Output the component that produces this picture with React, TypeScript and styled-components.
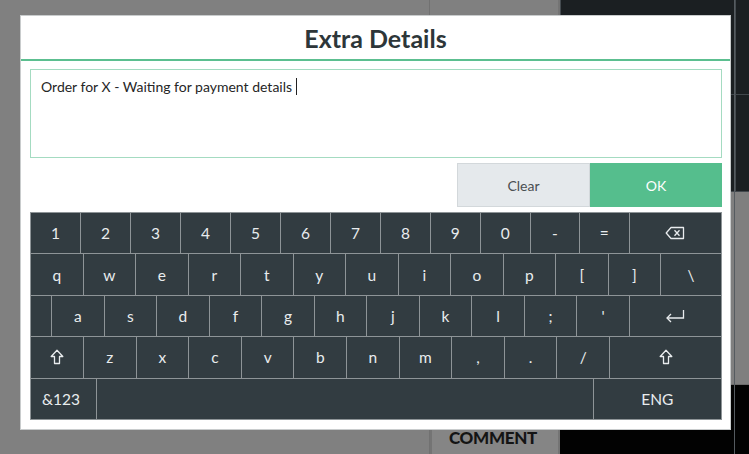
import React from "react";
import styled, { createGlobalStyle } from "styled-components";

const Global = createGlobalStyle`
  html, body { margin: 0; padding: 0; background: #808080; }
  body { font-family: Lato, "Segoe UI", "Open Sans", sans-serif; }
  * { box-sizing: border-box; }
`;

const Page = styled.div`
  position: relative;
  width: 749px;
  height: 454px;
  overflow: hidden;
  display: grid;
  grid-template-columns: 430px 130px 175px 14px;
  background: #808080;
`;

const GrayCol = styled.div`
  background: #808080;
  border-right: 1px solid #717171;
`;

const MidCol = styled.div`
  display: flex;
  flex-direction: column;
  justify-content: flex-end;
  background: #808080;
  border-right: 2px solid #747474;
`;

const CommentCell = styled.div`
  height: 30px;
  display: flex;
  align-items: center;
  justify-content: center;
  padding-bottom: 4px;
  padding-right: 4px;
  background: #858585;
  border-left: 2px solid #747474;
  font-weight: 900;
  font-size: 17px;
  color: #141414;
  letter-spacing: -0.3px;
`;

const RightCol = styled.div`
  display: grid;
  grid-template-rows: 95px 97px 193px 1fr;
  border-right: 1px solid #555b60;
`;

const Cell = styled.div<{ $tone: "dark" | "gray" | "black" }>`
  background: ${(p) =>
    p.$tone === "dark" ? "#1b1f22" : p.$tone === "gray" ? "#7f7f7f" : "#020202"};
  border-bottom: 1px solid
    ${(p) => (p.$tone === "dark" ? "#41474c" : p.$tone === "gray" ? "#6b6b6b" : "#020202")};
  border-left: ${(p) => (p.$tone === "dark" ? "1px solid #454b50" : "none")};
`;

const FarCol = styled.div`
  display: grid;
  grid-template-rows: 95px 97px 193px 1fr;
`;

const Modal = styled.div`
  position: absolute;
  left: 20px;
  top: 15px;
  width: 711px;
  height: 415px;
  background: #ffffff;
  border: 1px solid #c9cccd;
  display: flex;
  flex-direction: column;
`;

const Header = styled.div`
  height: 45px;
  display: flex;
  align-items: center;
  justify-content: center;
  border-bottom: 2px solid #5cbf90;
  font-size: 25px;
  font-weight: 700;
  color: #2d3639;
`;

const Body = styled.div`
  padding: 8px 8px 0 9px;
  display: flex;
  flex-direction: column;
`;

const TextBox = styled.div`
  height: 89px;
  border: 1px solid #a4dbc1;
  padding: 8px 10px;
  font-size: 14px;
  color: #262626;
  display: flex;
  align-items: flex-start;
`;

const Caret = styled.span`
  display: inline-block;
  width: 1px;
  height: 17px;
  background: #222;
  margin-left: 4px;
`;

const Actions = styled.div`
  display: flex;
  justify-content: flex-end;
  margin-top: 5px;
  height: 44px;
`;

const ActionButton = styled.button<{ $primary?: boolean }>`
  width: ${(p) => (p.$primary ? "132px" : "133px")};
  height: 44px;
  border: 1px solid ${(p) => (p.$primary ? "#55be8d" : "#d3d8db")};
  background: ${(p) => (p.$primary ? "#55be8d" : "#e5e9ec")};
  color: ${(p) => (p.$primary ? "#ffffff" : "#4a4f52")};
  font-family: inherit;
  font-size: 14px;
  padding: 0;
  cursor: pointer;
`;

const Keyboard = styled.div`
  margin-top: 5px;
  width: 692px;
  height: 208px;
  background: #323c41;
  border: 1px solid #8e9497;
  display: flex;
  flex-direction: column;
`;

const Row = styled.div`
  flex: 1;
  display: flex;
  border-bottom: 1px solid #8e9497;
  &:last-child { border-bottom: none; }
`;

const Key = styled.div<{ $w: number; $align?: "start" | "center" }>`
  flex: ${(p) => p.$w} 1 0;
  min-width: 0;
  display: flex;
  align-items: center;
  justify-content: ${(p) => (p.$align === "start" ? "flex-start" : "center")};
  color: #e9ecee;
  font-size: 15.5px;
  border-right: 1px solid #8e9497;
  &:last-child { border-right: none; }
`;

const KeyText = styled.span<{ $inset?: number }>`
  margin-left: ${(p) => p.$inset ?? 0}px;
`;

const BackspaceIcon = () => (
  <svg width="20" height="14" viewBox="0 0 20 14" fill="none" stroke="#e9ecee" strokeWidth="1.3">
    <path d="M6 1.5 H18.5 V12.5 H6 L1.2 7 Z" strokeLinejoin="round" />
    <path d="M9.5 4.2 L14.5 9.8 M14.5 4.2 L9.5 9.8" />
  </svg>
);

const EnterIcon = () => (
  <svg width="20" height="14" viewBox="0 0 20 14" fill="none" stroke="#e9ecee" strokeWidth="1.3">
    <path d="M18.5 1 V9 H2" />
    <path d="M6 5 L2 9 L6 13" />
  </svg>
);

const ShiftIcon = () => (
  <svg width="14" height="16" viewBox="0 0 14 16" fill="none" stroke="#e9ecee" strokeWidth="1.3" strokeLinejoin="round">
    <path d="M7 1.2 L12.8 7.5 H9.5 V14.5 H4.5 V7.5 H1.2 Z" />
  </svg>
);

type K = { label?: React.ReactNode; w: number };

const row1: K[] = [
  ..."1234567890".split("").map((c) => ({ label: c, w: 50 })),
  { label: "-", w: 49 },
  { label: "=", w: 50 },
  { label: <BackspaceIcon />, w: 93 },
];

const row2: K[] = [
  ..."qwertyuiop[]".split("").map((c) => ({ label: c, w: 52.5 })),
  { label: "\\", w: 61 },
];

const row3: K[] = [
  { w: 20.5 },
  ..."asdfghjkl;'".split("").map((c) => ({ label: c, w: 52.5 })),
  { label: <EnterIcon />, w: 93 },
];

const row4: K[] = [
  { label: <ShiftIcon />, w: 53 },
  ..."zxcvbnm,./".split("").map((c) => ({ label: c, w: 52.5 })),
  { label: <ShiftIcon />, w: 113 },
];

const KeyRow = ({ keys }: { keys: K[] }) => (
  <Row>
    {keys.map((k, i) => (
      <Key key={i} $w={k.w}>
        {k.label}
      </Key>
    ))}
  </Row>
);

export default function App() {
  return (
    <>
      <Global />
      <Page>
        <GrayCol />
        <MidCol>
          <CommentCell>COMMENT</CommentCell>
        </MidCol>
        <RightCol>
          <Cell $tone="dark" />
          <Cell $tone="dark" />
          <Cell $tone="gray" />
          <Cell $tone="black" />
        </RightCol>
        <FarCol>
          <Cell $tone="dark" />
          <Cell $tone="dark" />
          <Cell $tone="gray" />
          <Cell $tone="black" />
        </FarCol>
        <Modal>
          <Header>Extra Details</Header>
          <Body>
            <TextBox>
              Order for X - Waiting for payment details
              <Caret />
            </TextBox>
            <Actions>
              <ActionButton>Clear</ActionButton>
              <ActionButton $primary>OK</ActionButton>
            </Actions>
            <Keyboard>
              <KeyRow keys={row1} />
              <KeyRow keys={row2} />
              <KeyRow keys={row3} />
              <KeyRow keys={row4} />
              <Row>
                <Key $w={65} $align="start">
                  <KeyText $inset={11}>&amp;123</KeyText>
                </Key>
                <Key $w={498} />
                <Key $w={128}>ENG</Key>
              </Row>
            </Keyboard>
          </Body>
        </Modal>
      </Page>
    </>
  );
}
